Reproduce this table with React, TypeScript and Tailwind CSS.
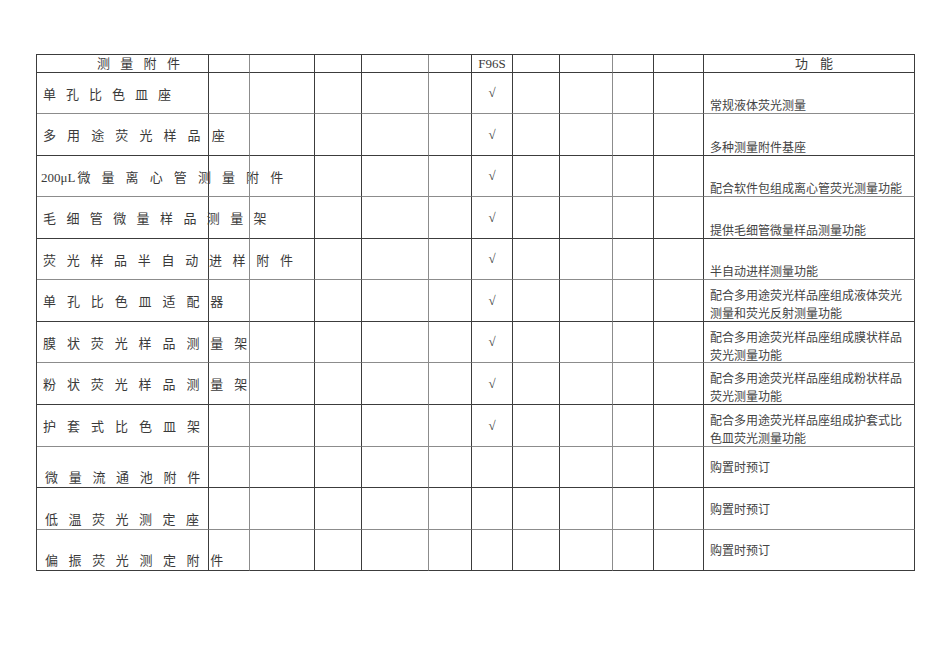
const cols = [
  "w-[172px]", "", "", "", "", "", "", "", "", "", "", "",
];

// right border colours per column (gray ones sit on half pixels in the scan)
const colBorder = [
  "border-r-[#3c3c3c]",
  "border-r-[#8c8c8c]",
  "border-r-[#3c3c3c]",
  "border-r-[#3c3c3c]",
  "border-r-[#8c8c8c]",
  "border-r-[#3c3c3c]",
  "border-r-[#3c3c3c]",
  "border-r-[#3c3c3c]",
  "border-r-[#8c8c8c]",
  "border-r-[#3c3c3c]",
  "border-r-[#3c3c3c]",
  "border-r-[#3c3c3c]",
];

type Row = {
  name: string;
  prefix?: string;
  track: string;
  check: boolean;
  fn: string[];
  nameAlign: "middle" | "bottom";
  fnAlign: "bottom" | "top" | "middle";
};

const rows: Row[] = [
  { name: "单孔比色皿座", track: "tracking-[10px]", check: true, fn: ["常规液体荧光测量"], nameAlign: "middle", fnAlign: "bottom" },
  { name: "多用途荧光样品座", track: "tracking-[11.1px]", check: true, fn: ["多种测量附件基座"], nameAlign: "middle", fnAlign: "bottom" },
  { prefix: "200μL", name: "微量离心管测量附件", track: "tracking-[11.1px]", check: true, fn: ["配合软件包组成离心管荧光测量功能"], nameAlign: "middle", fnAlign: "bottom" },
  { name: "毛细管微量样品测量架", track: "tracking-[10.4px]", check: true, fn: ["提供毛细管微量样品测量功能"], nameAlign: "middle", fnAlign: "bottom" },
  { name: "荧光样品半自动进样附件", track: "tracking-[10.7px]", check: true, fn: ["半自动进样测量功能"], nameAlign: "middle", fnAlign: "bottom" },
  { name: "单孔比色皿适配器", track: "tracking-[10.9px]", check: true, fn: ["配合多用途荧光样品座组成液体荧光", "测量和荧光反射测量功能"], nameAlign: "middle", fnAlign: "top" },
  { name: "膜状荧光样品测量架", track: "tracking-[10.9px]", check: true, fn: ["配合多用途荧光样品座组成膜状样品", "荧光测量功能"], nameAlign: "middle", fnAlign: "top" },
  { name: "粉状荧光样品测量架", track: "tracking-[10.9px]", check: true, fn: ["配合多用途荧光样品座组成粉状样品", "荧光测量功能"], nameAlign: "middle", fnAlign: "top" },
  { name: "护套式比色皿架", track: "tracking-[11px]", check: true, fn: ["配合多用途荧光样品座组成护套式比", "色皿荧光测量功能"], nameAlign: "middle", fnAlign: "top" },
  { name: "微量流通池附件", track: "tracking-[10.7px]", check: false, fn: ["购置时预订"], nameAlign: "bottom", fnAlign: "middle" },
  { name: "低温荧光测定座", track: "tracking-[10.5px]", check: false, fn: ["购置时预订"], nameAlign: "bottom", fnAlign: "middle" },
  { name: "偏振荧光测定附件", track: "tracking-[10.6px]", check: false, fn: ["购置时预订"], nameAlign: "bottom", fnAlign: "middle" },
];

// bottom border colour per row (header first)
const rowBorder = (i: number) =>
  i % 2 === 1 ? "border-b-[#8c8c8c]" : "border-b-[#3c3c3c]";

const cell = "border-r border-b overflow-visible whitespace-nowrap";

export default function App() {
  return (
    <div
      className="min-h-screen w-[950px] h-[672px] bg-white pt-[54px] pl-[36px] text-[#3a3a3a]"
      style={{ fontFamily: '"Liberation Serif", "Noto Sans CJK SC", serif' }}
    >
      <div className="grid w-[879px] border-l border-t border-[#3c3c3c] grid-cols-[172px_41px_65px_47px_67px_43px_41px_47px_53px_41px_50px_211px] grid-rows-[18px_41px_42px_41px_42px_41px_42px_41px_42px_42px_41px_42px_41px]">
        {/* header */}
        {cols.map((_, c) => (
          <div key={c} className={`${cell} ${colBorder[c]} border-b-[#3c3c3c] flex items-center text-[13px] leading-[16px]`}>
            {c === 0 && <span className="pl-[60px] tracking-[10.3px]">测量附件</span>}
            {c === 6 && <span className="w-full text-center">F96S</span>}
            {c === 11 && <span className="pl-[91px] tracking-[12px]">功能</span>}
          </div>
        ))}

        {rows.map((r, i) =>
          cols.map((_, c) => {
            const base = `${cell} ${colBorder[c]} ${rowBorder(i + 1)}`;
            if (c === 0) {
              return (
                <div
                  key={`${i}-${c}`}
                  className={`${base} flex text-[13px] leading-[16px] ${
                    r.nameAlign === "middle" ? "items-center pt-[3px] pl-[6px]" : "items-end pb-[1px] pl-[8px]"
                  }`}
                >
                  {r.prefix && <span className="-ml-[2px] mr-[2px]">{r.prefix}</span>}
                  <span className={r.track}>{r.name}</span>
                </div>
              );
            }
            if (c === 6) {
              return (
                <div key={`${i}-${c}`} className={`${base} flex items-center justify-center text-[13px]`}>
                  {r.check ? "√" : ""}
                </div>
              );
            }
            if (c === 11) {
              const align =
                r.fnAlign === "bottom"
                  ? "justify-end leading-[14px]"
                  : r.fnAlign === "top"
                  ? "justify-start pt-[7px] leading-[18px]"
                  : "justify-center pt-[2px] leading-[16px]";
              return (
                <div
                  key={`${i}-${c}`}
                  className={`${base} flex flex-col pl-[6px] text-[12px] text-[#444] ${align}`}
                >
                  {r.fn.map((line) => (
                    <span key={line}>{line}</span>
                  ))}
                </div>
              );
            }
            return <div key={`${i}-${c}`} className={base} />;
          })
        )}
      </div>
    </div>
  );
}
